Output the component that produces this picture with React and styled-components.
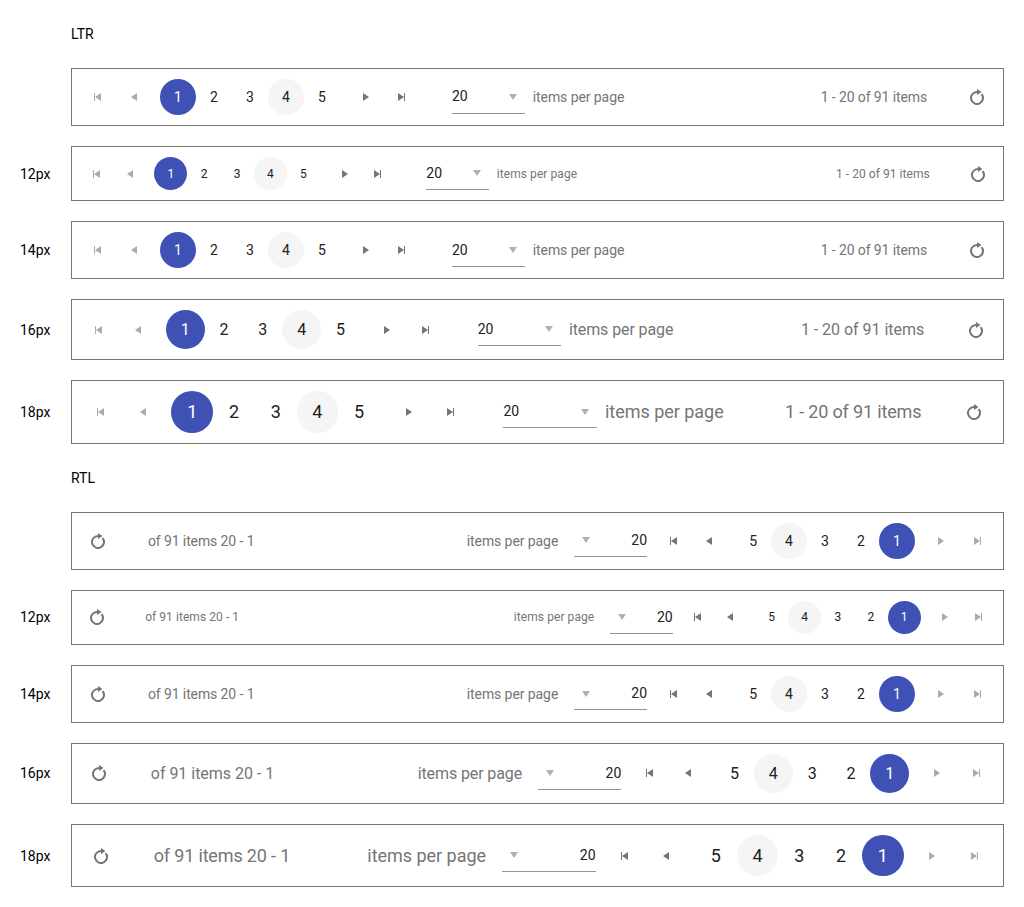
import React from 'react';
import styled, { createGlobalStyle } from 'styled-components';

const GlobalStyle = createGlobalStyle`
  * { box-sizing: border-box; }
  body {
    margin: 0;
    background: #fff;
    color: #000;
    font-family: Roboto, "Liberation Sans", sans-serif;
    font-size: 14px;
    line-height: 20px;
  }
`;

const Page = styled.main`
  display: flex;
  flex-direction: column;
  padding: 24px 20px 0;
`;

const Section = styled.section`
  display: flex;
  flex-direction: column;
`;

const Heading = styled.div`
  height: 20px;
  margin: 0 0 24px 51px;
`;

const Line = styled.div`
  display: grid;
  grid-template-columns: 51px 933px;
  align-items: center;
  margin-bottom: 20px;

  &:last-child {
    margin-bottom: 24.05px;
  }
`;

const Bar = styled.div`
  display: flex;
  align-items: center;
  padding: 10px 8px;
  border: 1px solid #757575;
  font-size: ${(p) => p.$size}px;
  line-height: 1.428571;
`;

const Button = styled.button`
  display: flex;
  flex: none;
  align-items: center;
  justify-content: center;
  width: calc(1.428571em + 16px);
  height: calc(1.428571em + 16px);
  padding: 0;
  border: 0;
  border-radius: 50%;
  background: transparent;
  color: ${(p) => (p.$dim ? '#ababab' : '#757575')};
  font: inherit;
`;

const PageNumber = styled(Button)`
  padding-top: ${(p) => p.$nudge}px;
  background: ${(p) => (p.$state === 'selected' ? '#3f51b5' : p.$state === 'hover' ? '#f5f5f5' : 'transparent')};
  color: ${(p) => (p.$state === 'selected' ? '#fff' : '#212121')};
`;

const Numbers = styled.div`
  display: flex;
  margin: 0 8.06px;
`;

const Sizes = styled.div`
  display: flex;
  align-items: center;
  margin-inline-start: ${(p) => (p.$rtl ? 8 : 32)}px;
  gap: ${(p) => (p.$rtl ? 16 : 8)}px;
`;

const Dropdown = styled.div`
  display: flex;
  align-items: center;
  justify-content: space-between;
  width: 5.2em;
  height: 33.1px;
  border-bottom: 1px solid #949494;
`;

const Value = styled.span`
  color: #212121;
  font-size: 14px;
  line-height: 20px;
`;

const ArrowBox = styled.span`
  display: flex;
  justify-content: center;
  width: 24px;
  padding-top: 0.6px;
  color: #b0b0b0;
`;

const Text = styled.span`
  padding-top: ${(p) => p.$nudge}px;
  color: #757575;
  letter-spacing: ${(p) => p.$tracking}px;
`;

const Info = styled(Text)`
  margin-inline-start: auto;
  margin-inline-end: 32px;
`;

const Svg = styled.svg`
  display: block;
  flex: none;
  width: 16px;
  height: 16px;
  fill: currentColor;
  transform: ${(p) => (p.$flip ? 'scaleX(-1)' : 'none')};
`;

const paths = {
  first: 'M4 4h1v8H4zM11 4v8L5 8z',
  prev: 'M11 4v8L5 8z',
  next: 'M5 4v8l6-4z',
  last: 'M10 4h1v8h-1zM4 4v8l6-4z',
  down: 'M4 5h8l-4 6z',
  reload: 'M13.36 4.5A7 7 0 1 1 8 2V0L12.5 3 8 6V4A5 5 0 1 0 11.8 5.8z',
};

const Icon = ({ name, flip }) => (
  <Svg viewBox="0 0 16 16" aria-hidden="true" $flip={flip}>
    <path d={paths[name]} />
  </Svg>
);

const states = { 1: 'selected', 4: 'hover' };

// Letter spacing and vertical offset for each text size.
const metrics = {
  12: { items: 0.07, info: 0.06, nudge: 1.2 },
  14: { items: -0.08, info: -0.11, nudge: 2 },
  16: { items: -0.1, info: -0.03, nudge: 1.6 },
  18: { items: -0.03, info: -0.16, nudge: 0 },
};

function Pager({ size, rtl }) {
  const m = metrics[size];
  return (
    <Bar $size={size} dir={rtl ? 'rtl' : 'ltr'}>
      <Button $dim aria-label="First page"><Icon name="first" flip={rtl} /></Button>
      <Button $dim aria-label="Previous page"><Icon name="prev" flip={rtl} /></Button>
      <Numbers>
        {[1, 2, 3, 4, 5].map((n) => (
          <PageNumber key={n} $state={states[n]} $nudge={m.nudge}>{n}</PageNumber>
        ))}
      </Numbers>
      <Button aria-label="Next page"><Icon name="next" flip={rtl} /></Button>
      <Button aria-label="Last page"><Icon name="last" flip={rtl} /></Button>
      <Sizes $rtl={rtl}>
        <Dropdown>
          <Value>20</Value>
          <ArrowBox><Icon name="down" /></ArrowBox>
        </Dropdown>
        <Text $tracking={m.items} $nudge={m.nudge}>items per page</Text>
      </Sizes>
      <Info $tracking={m.info} $nudge={m.nudge}>1 - 20 of 91 items</Info>
      <Button aria-label="Refresh"><Icon name="reload" /></Button>
    </Bar>
  );
}

const rows = [
  { label: '', size: 14 },
  { label: '12px', size: 12 },
  { label: '14px', size: 14 },
  { label: '16px', size: 16 },
  { label: '18px', size: 18 },
];

const Group = ({ title, rtl }) => (
  <Section>
    <Heading>{title}</Heading>
    {rows.map((row, i) => (
      <Line key={i}>
        <span>{row.label}</span>
        <Pager size={row.size} rtl={rtl} />
      </Line>
    ))}
  </Section>
);

export default function App() {
  return (
    <>
      <GlobalStyle />
      <Page>
        <Group title="LTR" />
        <Group title="RTL" rtl />
      </Page>
    </>
  );
}
